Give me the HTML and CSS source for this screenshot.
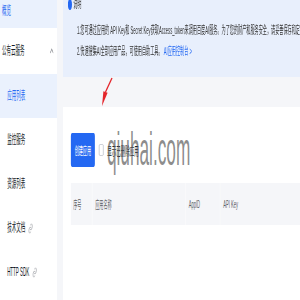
FILE: index.html
```html
<!DOCTYPE html>
<html lang="zh-CN">
<head>
    <meta charset="UTF-8">
    <meta name="viewport" content="width=device-width, initial-scale=1.0">
    <title>应用列表</title>
    <link rel="stylesheet" href="styles.css">
</head>
<body>

    <div class="page">
        <aside class="sidebar">
            <div class="nav-top active">概览</div>
            <div class="nav-group">
                <span>公有云服务</span>
                <svg class="chevron" width="10" height="6" viewBox="0 0 10 6"><polyline points="1,5 5,1 9,5" fill="none" stroke="#84868c" stroke-width="1.2"/></svg>
            </div>
            <div class="nav-sub active">应用列表</div>
            <div class="nav-sub">监控服务</div>
            <div class="nav-sub">资源列表</div>
            <div class="nav-sub">技术文档
                <svg class="link-icon" width="13" height="11" viewBox="0 0 24 24"><path d="M10 13a5 5 0 0 0 7.54.54l3-3a5 5 0 0 0-7.07-7.07l-1.72 1.71M14 11a5 5 0 0 0-7.54-.54l-3 3a5 5 0 0 0 7.07 7.07l1.71-1.71" fill="none" stroke="#9a9ca2" stroke-width="2"/></svg>
            </div>
            <div class="nav-sub">HTTP SDK
                <svg class="link-icon" width="13" height="11" viewBox="0 0 24 24"><path d="M10 13a5 5 0 0 0 7.54.54l3-3a5 5 0 0 0-7.07-7.07l-1.72 1.71M14 11a5 5 0 0 0-7.54-.54l-3 3a5 5 0 0 0 7.07 7.07l1.71-1.71" fill="none" stroke="#9a9ca2" stroke-width="2"/></svg>
            </div>
        </aside>

        <main class="content">
            <div class="alert">
                <div class="alert-title"><span class="info-icon"></span>说明</div>
                <p>1.您可通过应用的 API Key和 Secret Key获取Access_token来调用百度AI服务。为了您的财产和服务安全，请妥善保存和定期更换Secret Key。</p>
                <p>2.快速搜集AI全部应用产品，可使用自助工具。 <a href="#">AI应用控制台 &gt;</a></p>
            </div>

            <section class="card">
                <div class="toolbar">
                    <button class="btn-primary">创建应用</button>
                    <label class="check"><span class="checkbox"></span>显示已删除应用</label>
                </div>
                <table class="app-table">
                    <thead>
                        <tr>
                            <th class="col-no">序号</th>
                            <th class="col-name">应用名称</th>
                            <th class="col-id">AppID</th>
                            <th>API Key</th>
                        </tr>
                    </thead>
                </table>
            </section>
        </main>

        <div class="watermark">qiuhai.com</div>
    </div>

    <svg class="arrow" width="300" height="300" viewBox="0 0 300 300">
        <line x1="112" y1="78" x2="105.5" y2="92" stroke="#e4252b" stroke-width="1.3"/>
        <polygon points="107.6,92.7 102,106 103.4,91.2" fill="#e4252b"/>
    </svg>

</body>
</html>
```

FILE: styles.css
```css
body {
    margin: 0;
    width: 300px;
    height: 300px;
    overflow: hidden;
    position: relative;
    background-color: #f5f6f9;
    font-family: "Liberation Sans", "Noto Sans CJK SC", sans-serif;
    color: #151b26;
}
.page {
    position: relative;
    display: flex;
    width: 800px;
    height: 300px;
    overflow: hidden;
    transform: scaleX(0.375);
    transform-origin: 0 0;
}
.sidebar {
    width: 152px;
    flex-shrink: 0;
    background-color: #fff;
    font-size: 12px;
}
.nav-top {
    height: 28px;
    line-height: 22px;
    padding-left: 5px;
}
.nav-group {
    height: 46px;
    line-height: 46px;
    padding-left: 5px;
    padding-right: 9px;
    display: flex;
    align-items: center;
    justify-content: space-between;
}
.nav-sub {
    height: 44px;
    line-height: 44px;
    padding-left: 19px;
    display: flex;
    align-items: center;
    gap: 8px;
}
.active {
    background-color: #eaf1fd;
    color: #2468f2;
}
.content {
    flex: 1;
    min-width: 0;
    padding-left: 16px;
}
.alert {
    margin-top: -6px;
    padding: 0 0 16px 13px;
    background-color: #e8effc;
    font-size: 11px;
    color: #333;
    white-space: nowrap;
    overflow: hidden;
}
.alert-title {
    line-height: 20px;
    display: flex;
    align-items: center;
    gap: 3px;
}
.info-icon {
    width: 11px;
    height: 11px;
    border-radius: 50%;
    background-color: #2468f2;
}
.alert p {
    margin: 6px 0 0 24px;
    line-height: 20px;
}
.alert p + p {
    margin-top: 1px;
}
.alert a {
    color: #2468f2;
    text-decoration: none;
}
.card {
    margin-top: 30px;
    height: 167px;
    padding: 26px 0 0 21px;
    background-color: #fff;
}
.toolbar {
    display: flex;
    align-items: center;
    height: 34px;
}
.btn-primary {
    width: 64px;
    height: 34px;
    border: none;
    border-radius: 3px;
    background-color: #2468f2;
    color: #fff;
    font-family: inherit;
    font-size: 11px;
    padding: 0;
}
.check {
    display: flex;
    align-items: center;
    gap: 10px;
    margin-left: 11px;
    font-size: 12px;
    color: #151b26;
}
.checkbox {
    width: 10px;
    height: 10px;
    border: 1px solid #b8bcc4;
    border-radius: 2px;
    background-color: #fff;
}
.app-table {
    width: 100%;
    margin-top: 16px;
    border-collapse: collapse;
}
.app-table th {
    height: 42px;
    padding: 0 0 0 8px;
    background-color: #f5f6f9;
    border-left: 1px solid #fbfbfd;
    font-size: 11px;
    font-weight: normal;
    color: #5c5f66;
    text-align: left;
}
.app-table th:first-child {
    border-left: none;
    padding-left: 6px;
}
.col-no {
    width: 50px;
}
.col-name {
    width: 240px;
}
.col-id {
    width: 83px;
}
.watermark {
    position: absolute;
    left: 285px;
    top: 126px;
    font-size: 46px;
    line-height: 1;
    color: rgba(90, 90, 90, 0.7);
    pointer-events: none;
}
.arrow {
    position: absolute;
    left: 0;
    top: 0;
    pointer-events: none;
}
```
